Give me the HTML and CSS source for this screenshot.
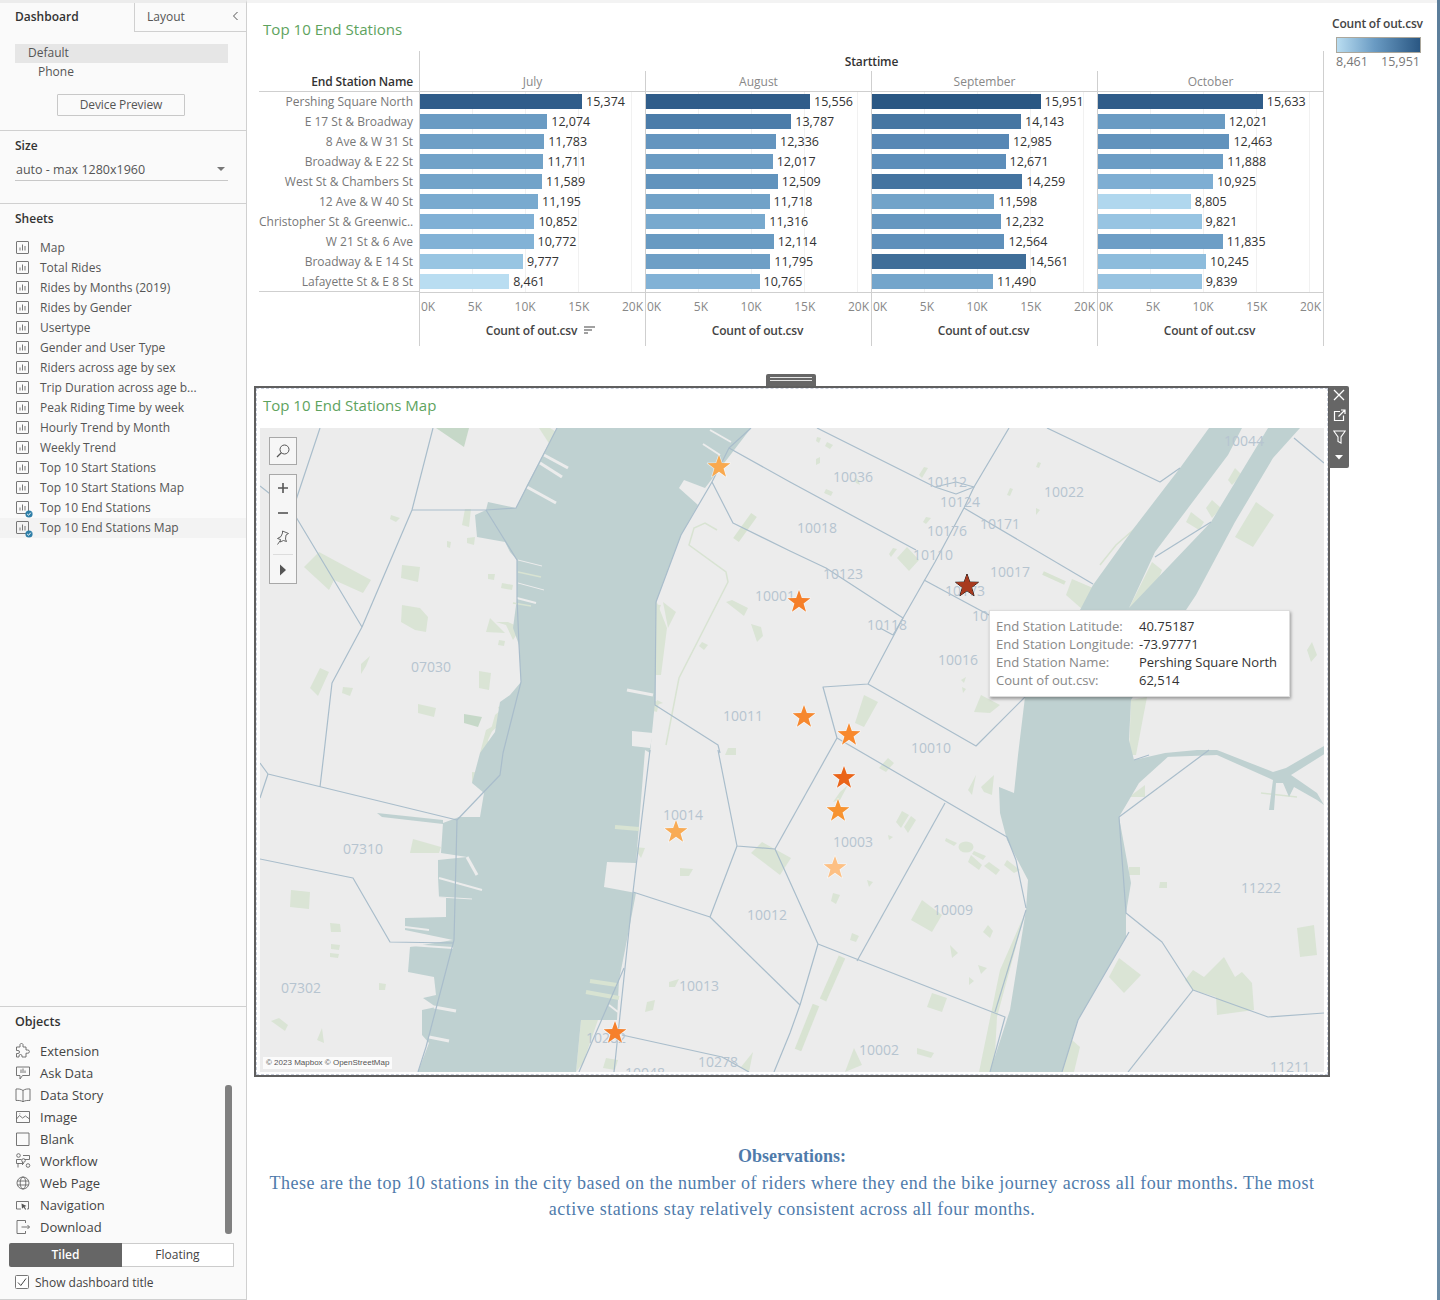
FILE: index.html
```html
<!DOCTYPE html>
<html lang="en">
<head>
<meta charset="utf-8">
<title>Top 10 End Stations dashboard</title>
<link rel="stylesheet" href="styles.css">
</head>
<body>
<svg class="defs" width="0" height="0" aria-hidden="true">
  <symbol id="sheet" viewBox="0 0 14 14"><rect x=".5" y=".5" width="12" height="12" rx=".5" fill="none" stroke="#777"/><path d="M4 9.5V6.5M6.5 9.5V3.5M9 9.5V5" fill="none" stroke="#777"/></symbol>
  <symbol id="check" viewBox="0 0 8 8"><circle cx="4" cy="4" r="3.6" fill="#2f7fa8"/><path d="M2.2 4l1.3 1.3 2.3-2.6" fill="none" stroke="#fff" stroke-width="1"/></symbol>
</svg>
<div class="app">
  <aside class="side">
    <div class="tabs">
      <div class="tab-on">Dashboard</div>
      <div class="tab-off">Layout<svg class="chev" width="7" height="10" viewBox="0 0 7 10"><path d="M5.5 1L1.5 5l4 4" fill="none" stroke="#555"/></svg></div>
    </div>
    <section class="sec-device">
      <div class="dev-default">Default</div>
      <div class="dev-phone">Phone</div>
      <button class="dev-btn" type="button">Device Preview</button>
    </section>
    <section class="sec-size">
      <h3 class="side-h">Size</h3>
      <div class="size-select"><span>auto - max 1280x1960</span><i class="caret"></i></div>
    </section>
    <section class="sec-sheets">
      <h3 class="side-h">Sheets</h3>
      <ul class="sheet-list">
        <li class="sheet"><svg class="sheet-ic"><use href="#sheet"/></svg>Map</li>
        <li class="sheet"><svg class="sheet-ic"><use href="#sheet"/></svg>Total Rides</li>
        <li class="sheet"><svg class="sheet-ic"><use href="#sheet"/></svg>Rides by Months (2019)</li>
        <li class="sheet"><svg class="sheet-ic"><use href="#sheet"/></svg>Rides by Gender</li>
        <li class="sheet"><svg class="sheet-ic"><use href="#sheet"/></svg>Usertype</li>
        <li class="sheet"><svg class="sheet-ic"><use href="#sheet"/></svg>Gender and User Type</li>
        <li class="sheet"><svg class="sheet-ic"><use href="#sheet"/></svg>Riders across age by sex</li>
        <li class="sheet"><svg class="sheet-ic"><use href="#sheet"/></svg>Trip Duration across age b...</li>
        <li class="sheet"><svg class="sheet-ic"><use href="#sheet"/></svg>Peak Riding Time by week</li>
        <li class="sheet"><svg class="sheet-ic"><use href="#sheet"/></svg>Hourly Trend by Month</li>
        <li class="sheet"><svg class="sheet-ic"><use href="#sheet"/></svg>Weekly Trend</li>
        <li class="sheet"><svg class="sheet-ic"><use href="#sheet"/></svg>Top 10 Start Stations</li>
        <li class="sheet"><svg class="sheet-ic"><use href="#sheet"/></svg>Top 10 Start Stations Map</li>
        <li class="sheet"><span class="ic-wrap"><svg class="sheet-ic"><use href="#sheet"/></svg><svg class="badge"><use href="#check"/></svg></span>Top 10 End Stations</li>
        <li class="sheet sheet-on"><span class="ic-wrap"><svg class="sheet-ic"><use href="#sheet"/></svg><svg class="badge"><use href="#check"/></svg></span>Top 10 End Stations Map</li>
      </ul>
    </section>
    <section class="sec-objects">
      <h3 class="side-h">Objects</h3>
      <ul class="obj-list">
        <li class="obj"><svg class="obj-ic" viewBox="0 0 16 16"><path d="M5 1.500a1.600 1.600 0 0 1 3 0V4h3v3h1.800a1.600 1.600 0 0 1 0 3.200H11V14H7v-1a1.500 1.500 0 0 0-3 0v1H1.500v-3.500H3a1.500 1.500 0 0 0 0-3H1.500V4H5z"/></svg>Extension</li>
        <li class="obj"><svg class="obj-ic" viewBox="0 0 16 16"><path d="M1.500 2h13v8.500H7.500l-2.500 3.500v-3.500H1.500zM6 4.500V8M8 3.500V8M10 5.500V8"/></svg>Ask Data</li>
        <li class="obj"><svg class="obj-ic" viewBox="0 0 16 16"><path d="M8 3.500C6 2 3.500 1.800 1 2v11.500c2.500-.2 5 0 7 1.200 2-1.200 4.500-1.400 7-1.200V2c-2.500-.2-5 0-7 1.500zM8 3.500v11"/></svg>Data Story</li>
        <li class="obj"><svg class="obj-ic" viewBox="0 0 16 16"><path d="M1.500 2.500h13v11h-13zM1.500 10l3-3.500 3 2.500 3-2 4 3M4.500 4.800h.8"/></svg>Image</li>
        <li class="obj"><svg class="obj-ic" viewBox="0 0 16 16"><path d="M1.500 2h12.500v12.500H1.500z"/></svg>Blank</li>
        <li class="obj"><svg class="obj-ic" viewBox="0 0 16 16"><circle cx="3.500" cy="2.500" r="1.800"/><path d="M8 2.500h6.500v4H9.500M1.500 6.500h5M1.500 6.500v4M1.500 10.500h3"/><circle cx="8.500" cy="7.500" r="1.800"/><circle cx="13" cy="12.500" r="1.800"/><path d="M3 14.500v-4h5.500M7 9l1.500 1.500L7 12"/></svg>Workflow</li>
        <li class="obj"><svg class="obj-ic" viewBox="0 0 16 16"><circle cx="8" cy="8" r="6"/><ellipse cx="8" cy="8" rx="2.800" ry="6"/><path d="M2.300 6h11.400M2.300 10h11.400"/></svg>Web Page</li>
        <li class="obj"><svg class="obj-ic" viewBox="0 0 16 16"><path d="M6 12H1.500V4.500h12V12H12"/><path class="solid" d="M6.500 6.500l5 2.500-2 .7 1.700 2.500-1 .6-1.600-2.500-1.600 1.400z"/></svg>Navigation</li>
        <li class="obj"><svg class="obj-ic" viewBox="0 0 16 16"><path d="M10.500 4V1.500H2v13h8.500V12M6.500 8h8M12.500 6l2 2-2 2"/></svg>Download</li>
      </ul>
      <div class="obj-scroll"></div>
      <div class="seg">
        <div class="seg-on">Tiled</div>
        <div class="seg-off">Floating</div>
      </div>
      <label class="title-check"><svg class="chk" viewBox="0 0 14 14"><rect x=".5" y=".5" width="13" height="13" rx="1" fill="#fff" stroke="#777"/><path d="M3 7.500l2.800 3L11 3.500" fill="none" stroke="#444"/></svg>Show dashboard title</label>
    </section>
  </aside>

  <main class="stage">
    <div class="stripe"></div>
    <div class="top-row">
      <div class="chart-col">
        <h2 class="sheet-title">Top 10 End Stations</h2>
        <div class="chart">
          <div class="cat-col">
            <div class="cat-head">End Station Name</div>
            <div class="cat-row">Pershing Square North</div>
            <div class="cat-row">E 17 St &amp; Broadway</div>
            <div class="cat-row">8 Ave &amp; W 31 St</div>
            <div class="cat-row">Broadway &amp; E 22 St</div>
            <div class="cat-row">West St &amp; Chambers St</div>
            <div class="cat-row">12 Ave &amp; W 40 St</div>
            <div class="cat-row">Christopher St &amp; Greenwic..</div>
            <div class="cat-row">W 21 St &amp; 6 Ave</div>
            <div class="cat-row">Broadway &amp; E 14 St</div>
            <div class="cat-row">Lafayette St &amp; E 8 St</div>
          </div>
          <div class="plot">
            <div class="start-head">Starttime</div>
            <div class="panes">
              <div class="pane">
                <div class="pane-head">July</div>
                <div class="pane-rows">
                  <div class="bar-row"><i class="bar" style="width:162px;background:#305d8a"></i>15,374</div>
                  <div class="bar-row"><i class="bar" style="width:127.3px;background:#6a9bc3"></i>12,074</div>
                  <div class="bar-row"><i class="bar" style="width:124.2px;background:#6e9fc6"></i>11,783</div>
                  <div class="bar-row"><i class="bar" style="width:123.4px;background:#71a2c8"></i>11,711</div>
                  <div class="bar-row"><i class="bar" style="width:122.1px;background:#72a3c9"></i>11,589</div>
                  <div class="bar-row"><i class="bar" style="width:118px;background:#79aacf"></i>11,195</div>
                  <div class="bar-row"><i class="bar" style="width:114.4px;background:#80b0d5"></i>10,852</div>
                  <div class="bar-row"><i class="bar" style="width:113.5px;background:#82b2d6"></i>10,772</div>
                  <div class="bar-row"><i class="bar" style="width:103px;background:#98c5e2"></i>9,777</div>
                  <div class="bar-row"><i class="bar" style="width:89.2px;background:#b9ddf1"></i>8,461</div>
                </div>
                <div class="axis"><div class="ticks"><span>0K</span><span>5K</span><span>10K</span><span>15K</span><span>20K</span></div>
                <div class="axis-title">Count of out.csv<svg class="sort" width="11" height="9" viewBox="0 0 11 9"><path d="M0 1h11M0 4h8M0 7h4" fill="none" stroke="#444" stroke-width="1.200"/></svg></div></div>
              </div>
              <div class="pane">
                <div class="pane-head">August</div>
                <div class="pane-rows">
                  <div class="bar-row"><i class="bar" style="width:164px;background:#305d8a"></i>15,556</div>
                  <div class="bar-row"><i class="bar" style="width:145.3px;background:#4b7ca9"></i>13,787</div>
                  <div class="bar-row"><i class="bar" style="width:130px;background:#6495bf"></i>12,336</div>
                  <div class="bar-row"><i class="bar" style="width:126.7px;background:#6a9bc3"></i>12,017</div>
                  <div class="bar-row"><i class="bar" style="width:131.8px;background:#6193bd"></i>12,509</div>
                  <div class="bar-row"><i class="bar" style="width:123.5px;background:#71a2c8"></i>11,718</div>
                  <div class="bar-row"><i class="bar" style="width:119.3px;background:#78a9ce"></i>11,316</div>
                  <div class="bar-row"><i class="bar" style="width:127.7px;background:#689ac2"></i>12,114</div>
                  <div class="bar-row"><i class="bar" style="width:124.3px;background:#6e9fc6"></i>11,795</div>
                  <div class="bar-row"><i class="bar" style="width:113.5px;background:#82b2d6"></i>10,765</div>
                </div>
                <div class="axis"><div class="ticks"><span>0K</span><span>5K</span><span>10K</span><span>15K</span><span>20K</span></div>
                <div class="axis-title">Count of out.csv</div></div>
              </div>
              <div class="pane">
                <div class="pane-head">September</div>
                <div class="pane-rows">
                  <div class="bar-row"><i class="bar" style="width:168.6px;background:#2a5783"></i>15,951</div>
                  <div class="bar-row"><i class="bar" style="width:149.1px;background:#4676a2"></i>14,143</div>
                  <div class="bar-row"><i class="bar" style="width:136.9px;background:#5888b5"></i>12,985</div>
                  <div class="bar-row"><i class="bar" style="width:133.6px;background:#5d8eba"></i>12,671</div>
                  <div class="bar-row"><i class="bar" style="width:150.3px;background:#4474a0"></i>14,259</div>
                  <div class="bar-row"><i class="bar" style="width:122.2px;background:#72a3c9"></i>11,598</div>
                  <div class="bar-row"><i class="bar" style="width:128.9px;background:#6697c0"></i>12,232</div>
                  <div class="bar-row"><i class="bar" style="width:132.4px;background:#5f90bb"></i>12,564</div>
                  <div class="bar-row"><i class="bar" style="width:153.5px;background:#3f6e99"></i>14,561</div>
                  <div class="bar-row"><i class="bar" style="width:121.1px;background:#74a5cb"></i>11,490</div>
                </div>
                <div class="axis"><div class="ticks"><span>0K</span><span>5K</span><span>10K</span><span>15K</span><span>20K</span></div>
                <div class="axis-title">Count of out.csv</div></div>
              </div>
              <div class="pane pane-last">
                <div class="pane-head">October</div>
                <div class="pane-rows">
                  <div class="bar-row"><i class="bar" style="width:164.8px;background:#2f5c89"></i>15,633</div>
                  <div class="bar-row"><i class="bar" style="width:126.7px;background:#6a9bc3"></i>12,021</div>
                  <div class="bar-row"><i class="bar" style="width:131.4px;background:#6293bd"></i>12,463</div>
                  <div class="bar-row"><i class="bar" style="width:125.3px;background:#6c9dc5"></i>11,888</div>
                  <div class="bar-row"><i class="bar" style="width:115.1px;background:#7eaed3"></i>10,925</div>
                  <div class="bar-row"><i class="bar" style="width:92.8px;background:#b0d7ee"></i>8,805</div>
                  <div class="bar-row"><i class="bar" style="width:103.5px;background:#97c4e2"></i>9,821</div>
                  <div class="bar-row"><i class="bar" style="width:124.7px;background:#6d9ec6"></i>11,835</div>
                  <div class="bar-row"><i class="bar" style="width:108px;background:#8dbcdc"></i>10,245</div>
                  <div class="bar-row"><i class="bar" style="width:103.7px;background:#97c3e1"></i>9,839</div>
                </div>
                <div class="axis"><div class="ticks"><span>0K</span><span>5K</span><span>10K</span><span>15K</span><span>20K</span></div>
                <div class="axis-title">Count of out.csv</div></div>
              </div>
            </div>
          </div>
        </div>
      </div>
      <div class="legend">
        <div class="legend-title">Count of out.csv</div>
        <div class="legend-ramp"></div>
        <div class="legend-range"><span>8,461</span><span>15,951</span></div>
      </div>
    </div>

    <div class="map-frame">
      <div class="grab"><i></i><i></i></div>
      <div class="map-tools">
        <svg width="12" height="12" viewBox="0 0 12 12"><path d="M1 1l10 10M11 1L1 11" fill="none" stroke="#fff" stroke-width="1.300"/></svg>
        <svg width="13" height="13" viewBox="0 0 13 13"><path d="M7 2.500H1.500v9h9V6.500M5.500 7.500L11.500 1.500M8 1h4v4" fill="none" stroke="#fff" stroke-width="1.200"/></svg>
        <svg width="13" height="14" viewBox="0 0 13 14"><path d="M.8 1h11.400L8 7v6l-3-1.500V7z" fill="none" stroke="#fff" stroke-width="1.100"/></svg>
        <svg width="8" height="5" viewBox="0 0 8 5"><path d="M0 0h8L4 4.500z" fill="#fff"/></svg>
      </div>
      <div class="map-inner">
        <h2 class="map-title">Top 10 End Stations Map</h2>
        <div class="map">
          <svg class="map-svg" viewBox="260 428 1064 644" width="1064" height="644">
            <defs>
              <polygon id="star" points="0,-12 2.820,-3.880 11.410,-3.710 4.570,1.480 7.050,9.710 0,4.800 -7.050,9.710 -4.570,1.480 -11.410,-3.710 -2.820,-3.880"/>
            </defs>
            <rect x="260" y="428" width="1064" height="644" fill="#ececec"/>

            <g class="parks">
              <polygon points="304,567 319,552 371,580 363,593 334,580 329,590"/>
              <polygon points="402,565 420,567 418,582 401,578"/>
              <polygon points="402,605 420,608 428,617 426,632 415,630 401,622"/>
              <polygon points="310,688 320,668 329,672 318,696"/>
              <polygon points="465,509 471,509 469,527 462,525"/>
              <polygon points="467,538 475,537 474,545 467,543"/>
              <polygon points="418,704 436,708 434,717 418,713"/>
              <polygon points="479,671 491,673 489,690 479,688"/>
              <polygon class="park-dark" points="464,714 482,717 478,727 464,723"/>
              <polygon points="343,687 353,688 350,696 342,693"/>
              <polygon points="361,664 370,656 366,666 361,674"/>
              <polygon points="391,515 400,518 396,522 390,519"/>
              <polygon points="486,632 490,618 505,633"/>
              <polygon points="496,622 506,625 513,640 521,628 508,622"/>
              <polygon points="499,640 505,641 504,646 498,645"/>
              <polygon points="488,574 495,574 494,580 488,579"/>
              <polygon points="502,583 513,585 512,590 501,588"/>
              <polygon points="447,541 451,542 450,548 447,547"/>
              <polygon points="495,725 488,740 491,753 480,753 486,730"/>
              <polygon points="508,704 498,707 503,722 490,733 495,715"/>
              <polygon points="550,428 558,433 550,445 539,428"/>
              <polygon class="park-dark" points="436,428 469,428 464,447"/>
              <polygon points="656,600 667,628 661,675 655,675 656,628"/>
              <polygon points="663,602 676,612 668,628"/>
              <polygon points="726,602 732,600 748,608 744,616"/>
              <polygon points="751,624 761,627 763,636 757,642"/>
              <polygon points="702,642 708,645 704,650 699,646"/>
              <polygon points="659,610 643,605 643,603 661,605"/>
              <polygon points="651,700 659,702 657,712 650,710"/>
              <polygon points="663,703 657,700 656,705"/>
              <polygon points="728,748 736,748 736,755 725,755"/>
              <polygon points="897,558 907,547 919,560 909,571"/>
              <polygon points="1066,595 1072,579 1093,588 1083,610"/>
              <polygon points="1235,537 1256,502 1274,515 1253,547"/>
              <polygon points="864,695 878,702 864,727 855,723"/>
              <polygon points="974,712 981,695 1000,705 990,713"/>
              <polygon points="1186,522 1191,512 1204,522 1199,530"/>
              <polygon points="1206,508 1212,500 1221,508 1212,518"/>
              <polygon points="1228,480 1235,468 1242,475 1232,485"/>
              <polygon points="1129,608 1152,562 1162,570 1147,608"/>
              <polygon points="291,890 310,892 309,909 290,907"/>
              <polygon points="472,772 490,773 498,776 490,787 472,782"/>
              <polygon points="410,853 413,839 441,847 439,853"/>
              <polygon points="330,923 340,924 341,932 331,932"/>
              <polygon points="331,944 340,945 339,950 331,949"/>
              <polygon points="330,953 339,954 338,958 330,957"/>
              <polygon points="271,1021 279,1018 288,1025 285,1031"/>
              <polygon points="322,1028 317,1040 324,1043"/>
              <polygon points="680,868 693,869 689,876 680,876"/>
              <polygon points="751,853 762,842 791,858 780,875"/>
              <polygon points="669,982 679,979 675,987 669,987"/>
              <polygon points="581,1020 598,1020 583,1063 576,1072"/>
              <polygon points="741,1067 753,1052 749,1072"/>
              <polygon points="606,1058 618,1060 615,1070 603,1068"/>
              <polygon points="647,1002 655,1000 653,1010 645,1012"/>
              <polygon points="634,847 645,848 641,858"/>
              <polygon points="379,983 386,984 385,990 379,990"/>
              <polygon points="896,822 902,811 909,815 901,828"/>
              <polygon points="904,827 911,816 916,820 908,833"/>
              <polygon points="911,920 922,900 942,915 932,932"/>
              <polygon points="927,1007 932,993 947,998 942,1012"/>
              <polygon points="1109,977 1119,958 1141,975 1124,993"/>
              <polygon points="1185,980 1193,970 1204,977 1224,957 1235,977 1242,972 1252,983 1254,1010 1217,1015 1216,997 1193,990"/>
              <polygon points="1297,928 1314,925 1317,955 1300,957"/>
              <polygon points="1160,882 1167,882 1167,888 1159,888"/>
              <polygon points="1129,867 1140,867 1140,875 1129,875"/>
              <polygon points="854,1048 862,1065 845,1072"/>
              <polygon points="917,1048 934,1053 931,1058 917,1054"/>
              <polygon points="979,1072 1000,970 1025,913 997,1017 994,1072"/>
              <polygon points="1062,1072 1072,1040 1080,1047 1074,1072"/>
              <polygon points="981,787 994,775 992,795 984,792"/>
              <polygon points="1129,797 1145,785 1145,797"/>
              <polygon points="1131,700 1147,697 1136,755 1129,755"/>
              <polygon points="840,792 848,785 840,800 833,802"/>
              <polygon points="833,893 840,895 836,904 831,901"/>
              <polygon points="888,835 893,837 889,840"/>
              <polygon points="867,880 873,882 869,887"/>
              <polygon points="852,933 859,936 856,942 850,940"/>
              <polygon points="988,925 993,931 990,938 983,932"/>
              <polygon points="978,965 987,968 981,974"/>
              <polygon points="950,945 958,953 952,958"/>
              <polygon points="921,905 933,910 930,915"/>
              <polygon points="969,977 974,981 969,985"/>
              <polygon points="888,758 894,763 886,772 879,768"/>
              <polygon points="971,855 982,865 979,870 968,862"/>
              <polygon points="989,862 1000,870 996,875 984,866"/>
              <polygon points="1007,860 1020,870 1014,873 1004,865"/>
              <polygon points="968,790 976,775 972,795"/>
              <ellipse cx="966" cy="847" rx="7.500" ry="5.500"/>
              <polygon points="946,838 957,843 954,846 945,841"/>
              <polygon points="974,851 986,856 983,860 972,854"/>
              <polygon points="827,442 833,445 830,449 825,446"/>
              <polygon points="817,437 821,438 819,443 816,441"/>
              <polygon points="816,459 820,457 820,463 816,465"/>
              <polygon points="826,489 833,492 831,496 824,493"/>
              <polygon points="854,478 858,479 860,485 856,483"/>
              <polygon points="924,467 928,468 922,478 919,475"/>
              <polygon points="893,548 897,549 891,557 889,554"/>
              <polygon points="926,517 931,518 926,524 923,522"/>
              <polygon points="1010,488 1013,489 1010,496 1007,495"/>
              <polygon points="1038,462 1041,463 1039,468 1036,467"/>
              <polygon points="1036,508 1040,510 1036,515"/>
              <polygon points="962,687 966,689 963,693"/>
              <polygon points="961,680 966,677 964,683"/>
              <polygon points="1030,1075 1036,1050 1040,1072"/>
              <polygon points="1204,660 1207,660 1205,680"/>
              <polygon points="1307,650 1312,642 1317,655 1311,662"/>
            </g>
            <g class="park-lines">
              <polyline points="717,530 705,523 694,528 689,545 726,572 728,582 679,678 666,745"/>
              <polyline class="pl-wide" points="633,622 655,627"/>
              <polyline class="pl-wide" points="634,637 655,641"/>
              <polyline class="pl-wide" points="632,650 655,655"/>
              <polyline class="pl-wide" points="631,664 655,669"/>
              <polyline class="pl-wide" points="1043,573 1065,583"/>
              <polyline class="pl-xl" points="736,540 754,515"/>
              <polyline class="pl-xl" points="842,957 823,1000"/>
              <polyline class="pl-xl" points="816,1005 798,1050"/>
              <polyline points="1100,565 1116,545 1139,525"/>
              <polyline points="1261,793 1297,797"/>
            </g>

            <g class="water">
              <polygon points="557,428 527,485 516,508 488,502 486,510 475,515 477,537 505,542 510,552 517,560 517,598 513,628 519,645 521,682 510,695 500,702 495,732 480,753 472,783 484,793 480,817 459,817 443,823 441,853 467,857 438,860 438,877 439,897 446,898 446,917 405,918 405,930 453,940 410,947 408,972 434,977 436,995 423,998 436,1007 422,1010 422,1035 429,1043 418,1072 576,1072 581,1020 617,1020 619,980 625,950 636,893 604,887 607,862 636,863 645,750 650,753 655,702 656,602 681,535 698,505 679,488 684,480 705,488 751,428"/>
              <polygon points="377,813 443,820 443,824 382,817"/>
              <polygon points="1209,428 1180,468 1134,528 1093,585 1080,610 1025,697 1018,755 1014,793 999,787 1000,813 1007,840 1028,880 1026,910 1010,1010 990,1072 1062,1072 1078,1020 1126,937 1126,913 1131,883 1119,817 1139,783 1170,755 1134,760 1129,740 1131,700 1186,610 1196,595 1235,522 1273,458 1300,428 1268,428 1211,522 1129,608 1155,552 1228,455 1242,428"/>
              <polygon points="1134,760 1165,753 1197,750 1217,750 1273,772 1286,768 1317,750 1326,745 1326,753 1291,775 1317,793 1324,805 1317,800 1294,787 1289,797 1283,783 1276,783 1274,810 1269,810 1273,780 1217,755 1165,757 1142,765"/>
            </g>

            <g class="piers">
              <line x1="544" y1="455" x2="568" y2="468"/>
              <line x1="540" y1="463" x2="562" y2="477"/>
              <line x1="527" y1="487" x2="556" y2="503"/>
              <line x1="710" y1="430" x2="731" y2="442" class="thin"/>
              <line x1="703" y1="444" x2="720" y2="455" class="thin"/>
              <line x1="518" y1="560" x2="542" y2="566" class="hair"/>
              <line x1="518" y1="583" x2="544" y2="590" class="hair"/>
              <line x1="513" y1="597" x2="536" y2="603" class="thin"/>
              <line x1="627" y1="690" x2="653" y2="695"/>
              <line x1="467" y1="857" x2="477" y2="875"/>
              <line x1="439" y1="878" x2="482" y2="890" class="thin"/>
              <line x1="439" y1="897" x2="472" y2="899" class="hair"/>
              <line x1="405" y1="927" x2="429" y2="930" class="thin"/>
              <line x1="410" y1="945" x2="453" y2="948" class="thin"/>
              <line x1="434" y1="1007" x2="456" y2="1011"/>
              <line x1="429" y1="1037" x2="449" y2="1041"/>
              <line x1="609" y1="1005" x2="618" y2="1012" class="thin"/>
              <polygon points="632,731 653,733 650,748 632,746"/>
            </g>
            <g class="park-lines">
              <polyline points="518,572 541,577"/>
              <polyline points="513,603 531,606"/>
              <polyline class="pl-wide" points="590,981 617,985"/>
              <polyline class="pl-wide" points="586,992 619,998"/>
              <polyline class="pl-wide" points="615,827 639,829"/>
            </g>

            <g class="zips">
              <polyline points="320,428 296,500 293,512"/>
              <polyline points="260,486 293,512 362,627"/>
              <polyline points="433,428 412,510 362,627 332,683 324,753 320,787"/>
              <polyline points="412,510 486,510 516,508 557,428"/>
              <polyline points="486,510 517,560 517,598 519,645 521,682 503,753 500,775 457,820 454,940 426,1047 418,1072"/>
              <polyline points="260,763 268,774 457,820"/>
              <polyline points="268,774 260,798"/>
              <polyline points="260,859 353,878 390,942 453,943"/>
              <polyline points="751,428 729,448 712,482 733,523 790,551 826,568 903,618 868,684 823,687 837,738"/>
              <polyline points="729,448 790,482 916,550"/>
              <polyline points="817,428 935,487 956,494 974,487 956,482 935,487"/>
              <polyline points="1009,428 974,487 964,508 935,562 903,618"/>
              <polyline points="964,508 1093,584"/>
              <polyline points="924,580 989,615"/>
              <polyline points="1047,428 1160,482 1180,468"/>
              <polyline points="893,635 903,618"/>
              <polyline points="880,628 893,635"/>
              <polyline points="868,684 976,746 1025,697"/>
              <polyline points="837,738 1007,837 1016,860 1026,908"/>
              <polyline points="837,738 775,849"/>
              <polyline points="718,750 737,846 775,849 790,882 818,944 1005,1017 990,1072"/>
              <polyline points="656,602 681,535 712,482"/>
              <polyline points="656,602 655,705 718,745 720,753"/>
              <polyline points="737,846 710,917 633,892"/>
              <polyline points="710,917 800,1005"/>
              <polyline points="818,944 800,1005 790,1033 774,1072"/>
              <polyline points="622,1035 722,1057 749,1072"/>
              <polyline points="650,750 633,892 614,1072"/>
              <polyline points="624,968 579,1072"/>
              <polyline points="857,961 945,803"/>
              <polyline points="995,1012 1026,910"/>
              <polyline points="1119,817 1209,750"/>
              <polyline points="1119,817 1126,913 1162,942 1193,990 1268,1017 1324,1013"/>
              <polyline points="1193,990 1128,1072"/>
              <polyline points="1129,932 1078,1020 1062,1072"/>
              <polyline points="1294,438 1324,463"/>
              <polyline points="1155,557 1211,522"/>
              <polyline points="1134,760 1149,755"/>
            </g>

            <g class="zip-labels">
              <text x="1244" y="446">10044</text>
              <text x="853" y="482">10036</text>
              <text x="947" y="487">10112</text>
              <text x="960" y="507">10124</text>
              <text x="1064" y="497">10022</text>
              <text x="1000" y="529">10171</text>
              <text x="817" y="533">10018</text>
              <text x="947" y="536">10176</text>
              <text x="933" y="560">10110</text>
              <text x="1010" y="577">10017</text>
              <text x="843" y="579">10123</text>
              <text x="775" y="601">10001</text>
              <text x="965" y="596">10173</text>
              <text x="980" y="621">10</text>
              <text x="887" y="630">10118</text>
              <text x="958" y="665">10016</text>
              <text x="431" y="672">07030</text>
              <text x="743" y="721">10011</text>
              <text x="931" y="753">10010</text>
              <text x="683" y="820">10014</text>
              <text x="363" y="854">07310</text>
              <text x="853" y="847">10003</text>
              <text x="1261" y="893">11222</text>
              <text x="953" y="915">10009</text>
              <text x="767" y="920">10012</text>
              <text x="699" y="991">10013</text>
              <text x="301" y="993">07302</text>
              <text x="879" y="1055">10002</text>
              <text x="606" y="1043">10282</text>
              <text x="718" y="1067">10278</text>
              <text x="645" y="1078">10048</text>
              <text x="1290" y="1072">11211</text>
            </g>

            <g class="stars">
              <use href="#star" x="719" y="467" fill="#f9a94f"/>
              <use href="#star" x="799" y="602" fill="#f57f29"/>
              <use href="#star" x="804" y="717" fill="#f6882f"/>
              <use href="#star" x="849" y="735" fill="#f8892e"/>
              <use href="#star" x="844" y="778" fill="#ea6419"/>
              <use href="#star" x="838" y="811" fill="#f79331"/>
              <use href="#star" x="676" y="832" fill="#f8ab55"/>
              <use href="#star" x="835" y="868" fill="#fdc084"/>
              <use href="#star" x="615" y="1033" fill="#f6802b"/>
              <use class="star-on" href="#star" x="967" y="586" fill="#a83a1f"/>
            </g>
          </svg>

          <div class="map-ctl map-search">
            <svg width="16" height="16" viewBox="0 0 16 16"><circle cx="9.500" cy="6.500" r="4.500" fill="none" stroke="#555"/><path d="M6.300 9.800L2 14" fill="none" stroke="#555" stroke-width="1.200"/></svg>
          </div>
          <div class="map-ctl map-zoom">
            <svg class="z-plus" width="12" height="12" viewBox="0 0 12 12"><path d="M6 1v10M1 6h10" stroke="#555" stroke-width="1.600"/></svg>
            <svg class="z-minus" width="12" height="12" viewBox="0 0 12 12"><path d="M1 6h10" stroke="#555" stroke-width="1.600"/></svg>
            <svg class="z-pin" width="16" height="16" viewBox="0 0 16 16"><path d="M7.500 1l6 2.500-2.500 1.500-.5 4 1 2.500-3-1-3.500 1.500 .5-2.500-3-1 3.500-2 1.500-3.500z M5 11L2.500 14.500" fill="none" stroke="#555" stroke-width=".9"/></svg>
            <i class="zoom-sep"></i>
            <svg class="z-play" width="8" height="12" viewBox="0 0 8 12"><path d="M1 .5L7 6 1 11.500z" fill="#555"/></svg>
          </div>
          <div class="map-credit">© 2023 Mapbox © OpenStreetMap</div>
          <div class="map-tip">
            <span class="tip-k">End Station Latitude:</span><span class="tip-v">40.75187</span>
            <span class="tip-k">End Station Longitude:</span><span class="tip-v">-73.97771</span>
            <span class="tip-k">End Station Name:</span><span class="tip-v">Pershing Square North</span>
            <span class="tip-k">Count of out.csv:</span><span class="tip-v">62,514</span>
          </div>
        </div>
      </div>
    </div>

    <div class="notes">
      <p class="notes-h">Observations:</p>
      <p class="notes-p">These are the top 10 stations in the city based on the number of riders where they end the bike journey across all four months. The most active stations stay relatively consistent across all four months.</p>
    </div>
  </main>
  <div class="desk-edge"></div>
</div>
</body>
</html>
```
FILE: styles.css
```css
* { box-sizing: border-box; }
html, body { margin: 0; padding: 0; background: #fff; }
body { font-family: "Open Sans", "Liberation Sans", sans-serif; font-size: 12px; color: #555; }
h2, h3, p, ul { margin: 0; padding: 0; font-weight: normal; }
ul { list-style: none; }
.defs { position: absolute; }

.app { display: flex; width: 1440px; height: 1300px; overflow: hidden; }

/* Sidebar */
.side { width: 247px; flex: none; display: flex; flex-direction: column; background: #fafafa; border-right: 1px solid #d0d0d0; border-bottom: 1px solid #d0d0d0; border-top: 3px solid #ececec; }
.tabs { display: flex; height: 29px; flex: none; }
.tab-on { width: 134px; padding: 5px 0 0 15px; font-weight: 600; color: #333; }
.tab-off { flex: 1; position: relative; padding: 5px 0 0 12px; color: #555; border-left: 1px solid #d0d0d0; border-bottom: 1px solid #d0d0d0; }
.chev { position: absolute; right: 7px; top: 8px; }
.sec-device { flex: none; padding: 12px 18px 14px 15px; border-bottom: 1px solid #d0d0d0; height: 99px; }
.dev-default { height: 19px; line-height: 18px; padding-left: 13px; background: #e6e6e6; color: #555; }
.dev-phone { height: 18px; line-height: 18px; padding-left: 23px; color: #555; }
.dev-btn { display: block; width: 128px; height: 22px; margin: 13px 0 0 42px; padding: 0 0 1px; font: inherit; letter-spacing: -.1px; color: #555; background: #fafafa; border: 1px solid #c8c8c8; border-radius: 1px; }
.sec-size { flex: none; height: 73px; padding: 7px 18px 0 15px; border-bottom: 1px solid #d0d0d0; }
.side-h { font-size: 12px; line-height: 16px; font-weight: 600; color: #333; }
.size-select { display: flex; align-items: center; justify-content: space-between; height: 21px; margin-top: 6px; padding: 0 3px 2px 1px; font-size: 12.500px; border-bottom: 1px solid #c8c8c8; }
.caret { border: 4px solid transparent; border-top-color: #777; border-bottom: 0; }
.sec-sheets { flex: 1; padding-top: 7px; }
.sec-sheets .side-h { padding-left: 15px; }
.sheet-list { margin-top: 11px; }
.sheet { display: flex; align-items: center; gap: 10px; height: 20px; padding: 0 0 2px 16px; color: #555; }
.sheet-on { background: #f3f3f3; }
.sheet-ic { width: 14px; height: 14px; flex: none; margin-top: 2px; }
.ic-wrap { position: relative; display: flex; flex: none; }
.badge { position: absolute; right: -3px; bottom: -3px; width: 8px; height: 8px; }
.sec-objects { flex: none; position: relative; height: 293px; padding-top: 7px; border-top: 1px solid #d0d0d0; }
.sec-objects .side-h { padding-left: 15px; font-size: 12.500px; }
.obj-list { margin-top: 10px; }
.obj { display: flex; align-items: center; gap: 9px; height: 22px; padding-left: 15px; font-size: 13px; color: #444; }
.obj-ic { width: 16px; height: 16px; flex: none; fill: none; stroke: #666; stroke-width: .9; }
.obj-ic .solid { fill: #555; stroke: none; }
.obj-scroll { position: absolute; left: 225px; top: 78px; width: 7px; height: 149px; border-radius: 3px; background: #808080; }
.seg { display: flex; width: 225px; height: 24px; margin: 5px 0 0 9px; }
.seg-on { width: 113px; line-height: 23px; text-align: center; color: #fff; font-weight: 600; background: #666; border-radius: 2px 0 0 2px; }
.seg-off { flex: 1; line-height: 22px; text-align: center; color: #444; background: #fff; border: 1px solid #ccc; border-left: 0; }
.title-check { display: flex; align-items: center; gap: 6px; height: 18px; margin: 6px 0 0 15px; color: #444; }
.chk { width: 14px; height: 14px; flex: none; }

/* Stage */
.stage { flex: 1; min-width: 0; background: #fff; }
.stripe { height: 3px; background: #f3f3f3; }
.top-row { display: flex; height: 343px; }
.chart-col { width: 1077px; padding-left: 12px; flex: none; }
.sheet-title { height: 48px; padding: 16px 0 0 4px; font-size: 15.100px; line-height: 20px; color: #5ea35e; }
.chart { display: flex; height: 295px; }
.cat-col { width: 160px; flex: none; }
.cat-head { height: 41px; padding: 22px 6px 0 0; line-height: 18px; text-align: right; font-weight: 600; letter-spacing: -.15px; color: #333; border-bottom: 1px solid #cfcfcf; }
.cat-row { height: 20px; line-height: 20px; padding-right: 6px; text-align: right; white-space: nowrap; color: #777; }
.cat-row:last-child { border-bottom: 1px solid #cfcfcf; height: 20px; }
.plot { width: 905px; flex: none; }
.start-head { height: 20px; padding-top: 1px; line-height: 20px; text-align: center; color: #333; font-weight: 600; letter-spacing: -.15px; border-left: 1px solid #cfcfcf; border-right: 1px solid #cfcfcf; }
.panes { display: flex; }
.pane { width: 226px; flex: none; border-left: 1px solid #cfcfcf; height: 275px; }
.pane-last { width: 227px; border-right: 1px solid #cfcfcf; }
.pane-head { height: 21px; padding-top: 1px; line-height: 20px; text-align: center; color: #888; border-bottom: 1px solid #cfcfcf; }
.pane-rows { height: 201px; border-bottom: 1px solid #cfcfcf; background-image: repeating-linear-gradient(90deg, transparent 0, transparent 52px, #f1f1f1 52px, #f1f1f1 53px); }
.bar-row { display: flex; align-items: flex-start; gap: 4px; height: 20px; padding-top: 2px; line-height: 15px; color: #333; font-size: 12.500px; }
.bar { display: block; height: 15px; flex: none; }
.axis { padding-top: 6px; }
.ticks { display: flex; justify-content: space-between; padding: 0 2px 0 1px; line-height: 16px; color: #888; }
.axis-title { position: relative; margin-top: 8px; padding-right: 2px; line-height: 16px; text-align: center; font-weight: 600; letter-spacing: -.15px; color: #444; }
.sort { position: absolute; left: 164px; top: 3px; }

.legend { flex: none; margin-left: 8px; padding-top: 13px; width: 96px; }
.legend-title { line-height: 16px; color: #444; font-weight: 600; letter-spacing: -.2px; white-space: nowrap; }
.legend-ramp { width: 85px; height: 16px; margin: 5px 0 0 4px; border: 1px solid #aba79c; background: linear-gradient(90deg, #b9ddf1, #6a9bc3 45%, #2a5783); }
.legend-range { display: flex; justify-content: space-between; width: 84px; margin-left: 4px; line-height: 18px; color: #777; font-size: 12.500px; }

/* Map */
.map-frame { position: relative; width: 1076px; height: 691px; margin: 40px 0 0 7px; border: 2px solid #5f5f5f; }
.map-inner { height: 100%; padding: 0 3px 3px; border: 1px dashed #c8cedb; }
.map-title { height: 39px; padding: 6px 0 0 3px; font-size: 15px; line-height: 20px; color: #5ea35e; }
.map { position: relative; width: 1064px; height: 644px; overflow: hidden; }
.map-svg { display: block; }
.grab { position: absolute; left: 510px; top: -14px; display: flex; flex-direction: column; align-items: center; gap: 2px; width: 50px; height: 12px; padding-top: 3px; background: #666; border-radius: 2px 2px 0 0; }
.grab i { display: block; width: 42px; height: 1px; background: #e5e5e5; }
.map-tools { position: absolute; left: 1073px; top: -2px; z-index: 2; display: flex; flex-direction: column; align-items: center; gap: 8px; width: 20px; height: 82px; padding-top: 3px; background: #666; border-radius: 0 2px 2px 0; }
.map-tools svg:last-child { margin-top: 3px; }

.parks polygon, .parks ellipse { fill: #dae4d5; }
.parks .park-dark { fill: #c6d8c8; }
.park-lines polyline { fill: none; stroke: #d8e3d2; stroke-width: 1.500; }
.park-lines .pl-wide { stroke-width: 4; }
.park-lines .pl-xl { stroke-width: 7; }
.water polygon { fill: #bfd1d1; }
.piers line { stroke: #ececec; stroke-width: 3; }
.piers .thin { stroke-width: 2; }
.piers .hair { stroke-width: 1; }
.piers polygon { fill: #ececec; }
.zips polyline { fill: none; stroke: #a9bdcb; stroke-width: 1.200; stroke-linejoin: round; }
.zip-labels text { font-family: "Open Sans", sans-serif; font-size: 14px; fill: #b6c4d0; text-anchor: middle; }
.stars use { stroke: #fff; stroke-opacity: .55; stroke-width: 1.500; stroke-linejoin: round; paint-order: stroke; }
.stars .star-on { stroke: #111; stroke-opacity: 1; stroke-width: 1; }

.map-ctl { position: absolute; left: 9px; display: flex; flex-direction: column; align-items: center; width: 28px; background: #f6f6f6; border: 1px solid #a8a8a8; }
.map-search { top: 9px; height: 28px; justify-content: center; }
.map-zoom { top: 46px; height: 110px; padding-top: 7px; }
.map-zoom svg { flex: none; }
.z-plus { margin-bottom: 13px; }
.z-minus { margin-bottom: 11px; }
.z-pin { margin-bottom: 8px; }
.zoom-sep { display: block; width: 20px; height: 1px; margin-bottom: 9px; background: #ddd; flex: none; }
.map-credit { position: absolute; left: 3px; bottom: 3px; height: 12px; padding: 0 3px; background: rgba(255,255,255,.8); font-family: "Liberation Sans", sans-serif; font-size: 8px; line-height: 12px; color: #555; white-space: nowrap; }
.map-tip { position: absolute; left: 729px; top: 182px; display: grid; grid-template-columns: 143px auto; grid-auto-rows: 18px; width: 301px; height: 87px; padding: 6px 6px; background: #fff; border: 1px solid #ddd; box-shadow: 1px 2px 3px rgba(0,0,0,.35); line-height: 18px; white-space: nowrap; }
.tip-k { color: #888; font-size: 13.100px; }
.tip-v { color: #333; font-size: 13px; }

/* Notes */
.notes { width: 1076px; margin-left: 7px; padding-top: 66px; text-align: center; font-family: "Liberation Serif", serif; color: #4f7bab; font-size: 18px; line-height: 26.500px; }
.notes-h { font-weight: bold; }
.notes-p { letter-spacing: .5px; }

.desk-edge { width: 3px; flex: none; background: linear-gradient(#5a7d9a, #8aa3b5 50%, #6a8ba5); }
```
